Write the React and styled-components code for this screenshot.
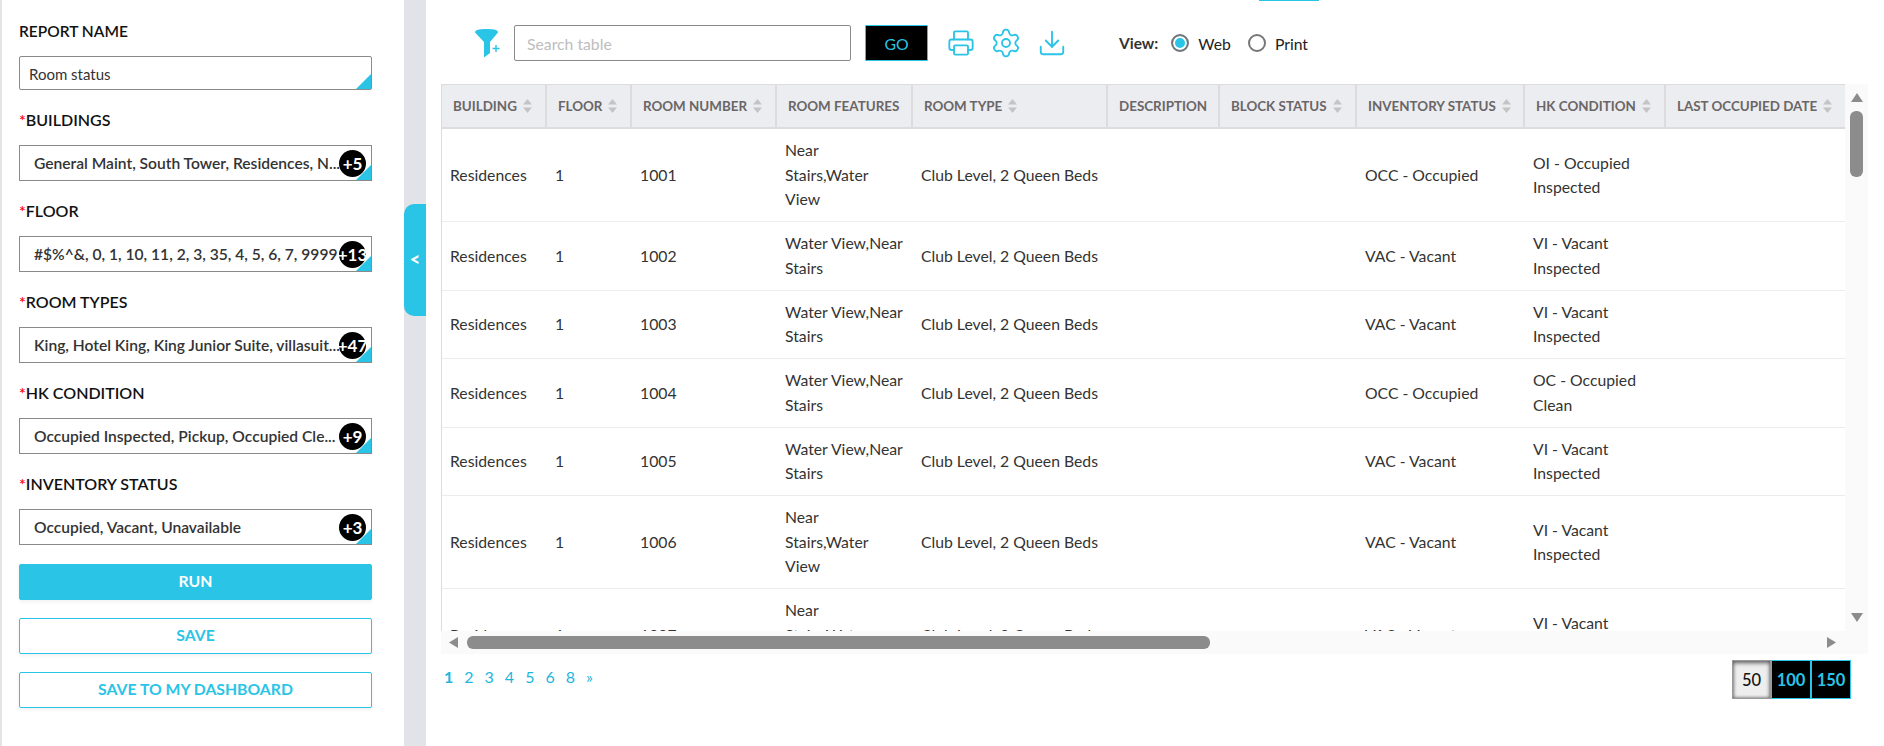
import React from 'react'
import styled, { createGlobalStyle } from 'styled-components'
import { Printer, Settings, Download } from 'lucide-react'

const BLUE = '#2ac4e6'

const fields = [
  { label: 'BUILDINGS', text: 'General Maint, South Tower, Residences, N...', count: '+5' },
  { label: 'FLOOR', text: '#$%^&, 0, 1, 10, 11, 2, 3, 35, 4, 5, 6, 7, 9999', count: '+13' },
  { label: 'ROOM TYPES', text: 'King, Hotel King, King Junior Suite, villasuit...', count: '+47' },
  { label: 'HK CONDITION', text: 'Occupied Inspected, Pickup, Occupied Cle...', count: '+9' },
  { label: 'INVENTORY STATUS', text: 'Occupied, Vacant, Unavailable', count: '+3' },
]

const columns = [
  { title: 'BUILDING', width: 105, sort: true },
  { title: 'FLOOR', width: 85, sort: true },
  { title: 'ROOM NUMBER', width: 145, sort: true },
  { title: 'ROOM FEATURES', width: 136 },
  { title: 'ROOM TYPE', width: 195, sort: true },
  { title: 'DESCRIPTION', width: 112 },
  { title: 'BLOCK STATUS', width: 137, sort: true },
  { title: 'INVENTORY STATUS', width: 168, sort: true },
  { title: 'HK CONDITION', width: 141, sort: true },
  { title: 'LAST OCCUPIED DATE', width: 200, sort: true },
]

const NEAR = 'Near Stairs,Water View'
const WATER = 'Water View,Near Stairs'
const OCC = 'OCC - Occupied'
const VAC = 'VAC - Vacant'
const VI = 'VI - Vacant Inspected'

const rows = [
  ['1001', NEAR, OCC, 'OI - Occupied Inspected'],
  ['1002', WATER, VAC, VI],
  ['1003', WATER, VAC, VI],
  ['1004', WATER, OCC, 'OC - Occupied Clean'],
  ['1005', WATER, VAC, VI],
  ['1006', NEAR, VAC, VI],
  ['1007', NEAR, VAC, VI],
]

const GlobalStyle = createGlobalStyle`
  html, body {
    margin: 0;
    height: 100%;
    background: #fff;
    overflow: hidden;
    font-family: Lato, "Open Sans", sans-serif;
    color: #333;
  }
`

const App = () => {
  return (
    <>
      <GlobalStyle />
      <Page>
        <Sidebar>
          <Field>
            <ReportLabel>REPORT NAME</ReportLabel>
            <NameBox>Room status</NameBox>
          </Field>
          {fields.map((f) => (
            <Field key={f.label}>
              <Label><Star>*</Star>{f.label}</Label>
              <SelectBox>
                <SelectText>{f.text}</SelectText>
                <Badge>{f.count}</Badge>
              </SelectBox>
            </Field>
          ))}
          <RunButton>RUN</RunButton>
          <OutlineButton>SAVE</OutlineButton>
          <OutlineButton>SAVE TO MY DASHBOARD</OutlineButton>
        </Sidebar>
        <Strip>
          <Toggle>&lt;</Toggle>
        </Strip>
        <Main>
          <TopMark />
          <Toolbar>
            <FilterIcon viewBox="0 0 25 30">
              <path d="M0 4.5C0 1.5 5 1 11.5 1S23 1.5 23 4.5L15 14V25L9 29.5V14Z" fill={BLUE} />
              <path d="M21 17v7M17.5 20.5h7" stroke={BLUE} strokeWidth="1.4" fill="none" />
            </FilterIcon>
            <SearchInput placeholder="Search table" />
            <GoButton>GO</GoButton>
            <Tools>
              <Printer size={28} strokeWidth={1.6} />
              <Settings size={32} strokeWidth={1.4} />
              <Download size={30} strokeWidth={1.5} />
            </Tools>
            <ViewLabel>View:</ViewLabel>
            <RadioLabel><Radio $checked />Web</RadioLabel>
            <RadioLabel><Radio />Print</RadioLabel>
          </Toolbar>
          <Frame>
            <TableView>
              <Table>
                <colgroup>
                  {columns.map((c) => <Col key={c.title} $w={c.width} />)}
                </colgroup>
                <thead>
                  <tr>
                    {columns.map((c) => (
                      <Th key={c.title}>
                        <HeadInner>
                          {c.title}
                          {c.sort && <SortIcon viewBox="0 0 9 14"><path d="M4.5 0L9 5.5H0Z" /><path d="M4.5 14L9 8.5H0Z" /></SortIcon>}
                        </HeadInner>
                      </Th>
                    ))}
                  </tr>
                </thead>
                <tbody>
                  {rows.map((r) => (
                    <tr key={r[0]}>
                      <Td>Residences</Td>
                      <Td>1</Td>
                      <Td>{r[0]}</Td>
                      <Td>{r[1]}</Td>
                      <Td>Club Level, 2 Queen Beds</Td>
                      <Td></Td>
                      <Td></Td>
                      <Td>{r[2]}</Td>
                      <Td>{r[3]}</Td>
                      <Td></Td>
                    </tr>
                  ))}
                </tbody>
              </Table>
            </TableView>
            <VScroll>
              <Arrow viewBox="0 0 12 9"><path d="M6 0L12 9H0Z" /></Arrow>
              <VThumb />
              <ArrowDown viewBox="0 0 12 9"><path d="M0 0H12L6 9Z" /></ArrowDown>
            </VScroll>
            <HScroll>
              <HArrow viewBox="0 0 9 11"><path d="M9 0V11L0 5.5Z" /></HArrow>
              <HThumb />
              <HArrowRight viewBox="0 0 9 11"><path d="M0 0V11L9 5.5Z" /></HArrowRight>
            </HScroll>
          </Frame>
          <Footer>
            <Pages>
              <PageLink $active>1</PageLink>
              {['2', '3', '4', '5', '6', '8', '»'].map((p) => <PageLink key={p}>{p}</PageLink>)}
            </Pages>
            <SizeGroup>
              <SizeButton $active>50</SizeButton>
              <SizeButton>100</SizeButton>
              <SizeButton>150</SizeButton>
            </SizeGroup>
          </Footer>
        </Main>
      </Page>
    </>
  )
}

const Page = styled.div`
  display: flex;
  width: 1884px;
  height: 746px;
`

const Sidebar = styled.aside`
  width: 404px;
  box-sizing: border-box;
  border-left: 2px solid #e4e4e4;
  padding: 21px 32px 0 17px;
  flex-shrink: 0;
`

const Field = styled.div`
  margin-bottom: 20px;
`

const Label = styled.div`
  font-size: 16px;
  line-height: 20px;
  font-weight: 600;
  color: #111;
  margin-bottom: 15px;
`

const ReportLabel = styled(Label)`
  font-size: 15.5px;
`

const Star = styled.span`
  color: #f00;
`

const Corner = styled.div`
  position: relative;
  box-sizing: border-box;
  background: #fff;
  border: 1px solid #8a8a8a;

  &::after {
    content: '';
    position: absolute;
    right: 0;
    bottom: 0;
    width: 0;
    height: 0;
    border-style: solid;
    border-width: 0 0 15px 15px;
    border-color: transparent transparent ${BLUE} transparent;
  }
`

const NameBox = styled(Corner)`
  height: 34px;
  border-radius: 2px;
  padding-left: 9px;
  font-size: 15px;
  line-height: 34px;
  color: #333;
`

const SelectBox = styled(Corner)`
  height: 36px;
  display: flex;
  align-items: center;
  padding-left: 14px;
  overflow: hidden;
`

const SelectText = styled.span`
  font-size: 15.6px;
  font-weight: 600;
  color: #333;
  white-space: nowrap;
`

const Badge = styled.span`
  position: absolute;
  right: 5px;
  top: 4px;
  width: 27px;
  height: 27px;
  border-radius: 50%;
  background: #000;
  color: #fff;
  font-size: 17px;
  font-weight: 700;
  line-height: 27px;
  white-space: nowrap;
  display: flex;
  justify-content: center;
`

const RunButton = styled.button`
  display: block;
  width: 100%;
  height: 36px;
  margin: -1px 0 18px;
  padding: 0 0 3px;
  border: 1px solid ${BLUE};
  border-radius: 2px;
  background: ${BLUE};
  color: #fff;
  font: 700 15.75px Lato, sans-serif;
  box-shadow: 0 2px 4px rgba(0, 0, 0, 0.06);
`

const OutlineButton = styled(RunButton)`
  margin-top: 0;
  background: #fff;
  color: ${BLUE};
`

const Strip = styled.div`
  width: 22px;
  flex-shrink: 0;
  background: #e1e3e8;
`

const Toggle = styled.div`
  margin-top: 204px;
  height: 112px;
  border-radius: 10px 0 0 10px;
  background: ${BLUE};
  color: #fff;
  font-size: 18px;
  font-weight: 900;
  line-height: 110px;
  text-align: center;
`

const Main = styled.main`
  position: relative;
  flex: 1;
  min-width: 0;
`

const TopMark = styled.div`
  position: absolute;
  top: 0;
  left: 833px;
  width: 60px;
  height: 1px;
  background: ${BLUE};
`

const Toolbar = styled.div`
  height: 84px;
  box-sizing: border-box;
  padding: 2px 0 0 49px;
  display: flex;
  align-items: center;
`

const FilterIcon = styled.svg`
  width: 25px;
  height: 30px;
  flex-shrink: 0;
`

const SearchInput = styled.input`
  width: 337px;
  height: 36px;
  box-sizing: border-box;
  margin-left: 14px;
  padding: 0 12px;
  border: 1px solid #8a8a8a;
  border-radius: 2px;
  outline: none;
  font: 400 15.75px Lato, sans-serif;

  &::placeholder {
    color: #bdbdbd;
  }
`

const GoButton = styled.button`
  width: 63px;
  height: 36px;
  margin-left: 14px;
  border: 1px solid ${BLUE};
  border-radius: 1px;
  background: #000;
  color: ${BLUE};
  font: 400 15.75px Lato, sans-serif;
`

const Tools = styled.div`
  display: flex;
  align-items: center;
  gap: 15px;
  margin-left: 19px;
  color: ${BLUE};
`

const ViewLabel = styled.span`
  margin-left: 52px;
  margin-right: 13px;
  font-size: 15.5px;
  font-weight: 700;
  color: #333;
`

const RadioLabel = styled.label`
  display: flex;
  align-items: center;
  gap: 9px;
  margin-right: 17px;
  font-size: 15.75px;
  color: #222;
`

const Radio = styled.span`
  width: 18px;
  height: 18px;
  box-sizing: border-box;
  border: 2px solid #777;
  border-radius: 50%;
  background: ${(p) => (p.$checked ? BLUE : '#fff')};
  box-shadow: inset 0 0 0 2px #fff;
`

const Frame = styled.div`
  display: grid;
  grid-template-columns: 1404px 23px;
  grid-template-rows: 547px 23px;
  margin-left: 15px;
`

const TableView = styled.div`
  overflow: hidden;
  box-sizing: border-box;
  border-left: 1px solid #dcdcdc;
`

const Table = styled.table`
  table-layout: fixed;
  width: 1424px;
  border-collapse: separate;
  border-spacing: 0;
`

const Col = styled.col`
  width: ${(p) => p.$w}px;
`

const Th = styled.th`
  height: 45px;
  box-sizing: border-box;
  padding: 0 0 0 11px;
  background: #ecedf1;
  border-top: 1px solid #dcdcdc;
  border-bottom: 2px solid #dcdcdc;
  border-right: 2px solid #dcdcdc;
  color: #6a6666;
  font-size: 13.4px;
  font-weight: 700;
  text-align: left;
  white-space: nowrap;
`

const HeadInner = styled.span`
  display: flex;
  align-items: center;
  gap: 6px;
`

const SortIcon = styled.svg`
  width: 9px;
  height: 14px;
  fill: #c4c4c4;
  flex-shrink: 0;
`

const Td = styled.td`
  padding: 9.25px 8px 9.25px 8px;
  border-bottom: 1px solid #ececec;
  font-size: 15.75px;
  line-height: 24.5px;
  color: #333;
  vertical-align: middle;
`

const VScroll = styled.div`
  background: #fafafa;
  display: flex;
  flex-direction: column;
  align-items: center;
  padding: 9px 0;
  box-sizing: border-box;
`

const Arrow = styled.svg`
  width: 12px;
  height: 9px;
  fill: #8c8c8c;
  flex-shrink: 0;
`

const ArrowDown = styled(Arrow)`
  margin-top: auto;
`

const VThumb = styled.div`
  width: 13px;
  height: 66px;
  margin-top: 9px;
  border-radius: 6px;
  background: #8c8c8c;
`

const HScroll = styled.div`
  grid-column: 1 / 3;
  background: #fafafa;
  display: flex;
  align-items: center;
  padding: 0 32px 0 8px;
`

const HArrow = styled.svg`
  width: 9px;
  height: 11px;
  fill: #8c8c8c;
  flex-shrink: 0;
`

const HArrowRight = styled(HArrow)`
  margin-left: auto;
`

const HThumb = styled.div`
  width: 743px;
  height: 13px;
  margin-left: 9px;
  border-radius: 6px;
  background: #8c8c8c;
`

const Footer = styled.div`
  display: flex;
  justify-content: space-between;
  align-items: flex-start;
  margin: 6px 33px 0 18px;
`

const Pages = styled.div`
  display: flex;
  gap: 11px;
  margin-top: 7px;
`

const PageLink = styled.a`
  color: #1fb6dc;
  font-size: 16px;
  font-weight: ${(p) => (p.$active ? 700 : 400)};
`

const SizeGroup = styled.div`
  display: flex;
`

const SizeButton = styled.button`
  width: ${(p) => (p.$active ? '39px' : '40px')};
  height: 39px;
  padding: 0;
  box-sizing: border-box;
  border: 1px solid ${(p) => (p.$active ? '#999' : BLUE)};
  background: ${(p) => (p.$active ? '#eee' : '#000')};
  color: ${(p) => (p.$active ? '#111' : BLUE)};
  box-shadow: ${(p) => (p.$active ? 'inset 0 2px 4px rgba(0,0,0,.6), inset 0 -1px 3px rgba(0,0,0,.3)' : 'none')};
  font: ${(p) => (p.$active ? 500 : 700)} 16.5px Lato, sans-serif;
`

export default App
